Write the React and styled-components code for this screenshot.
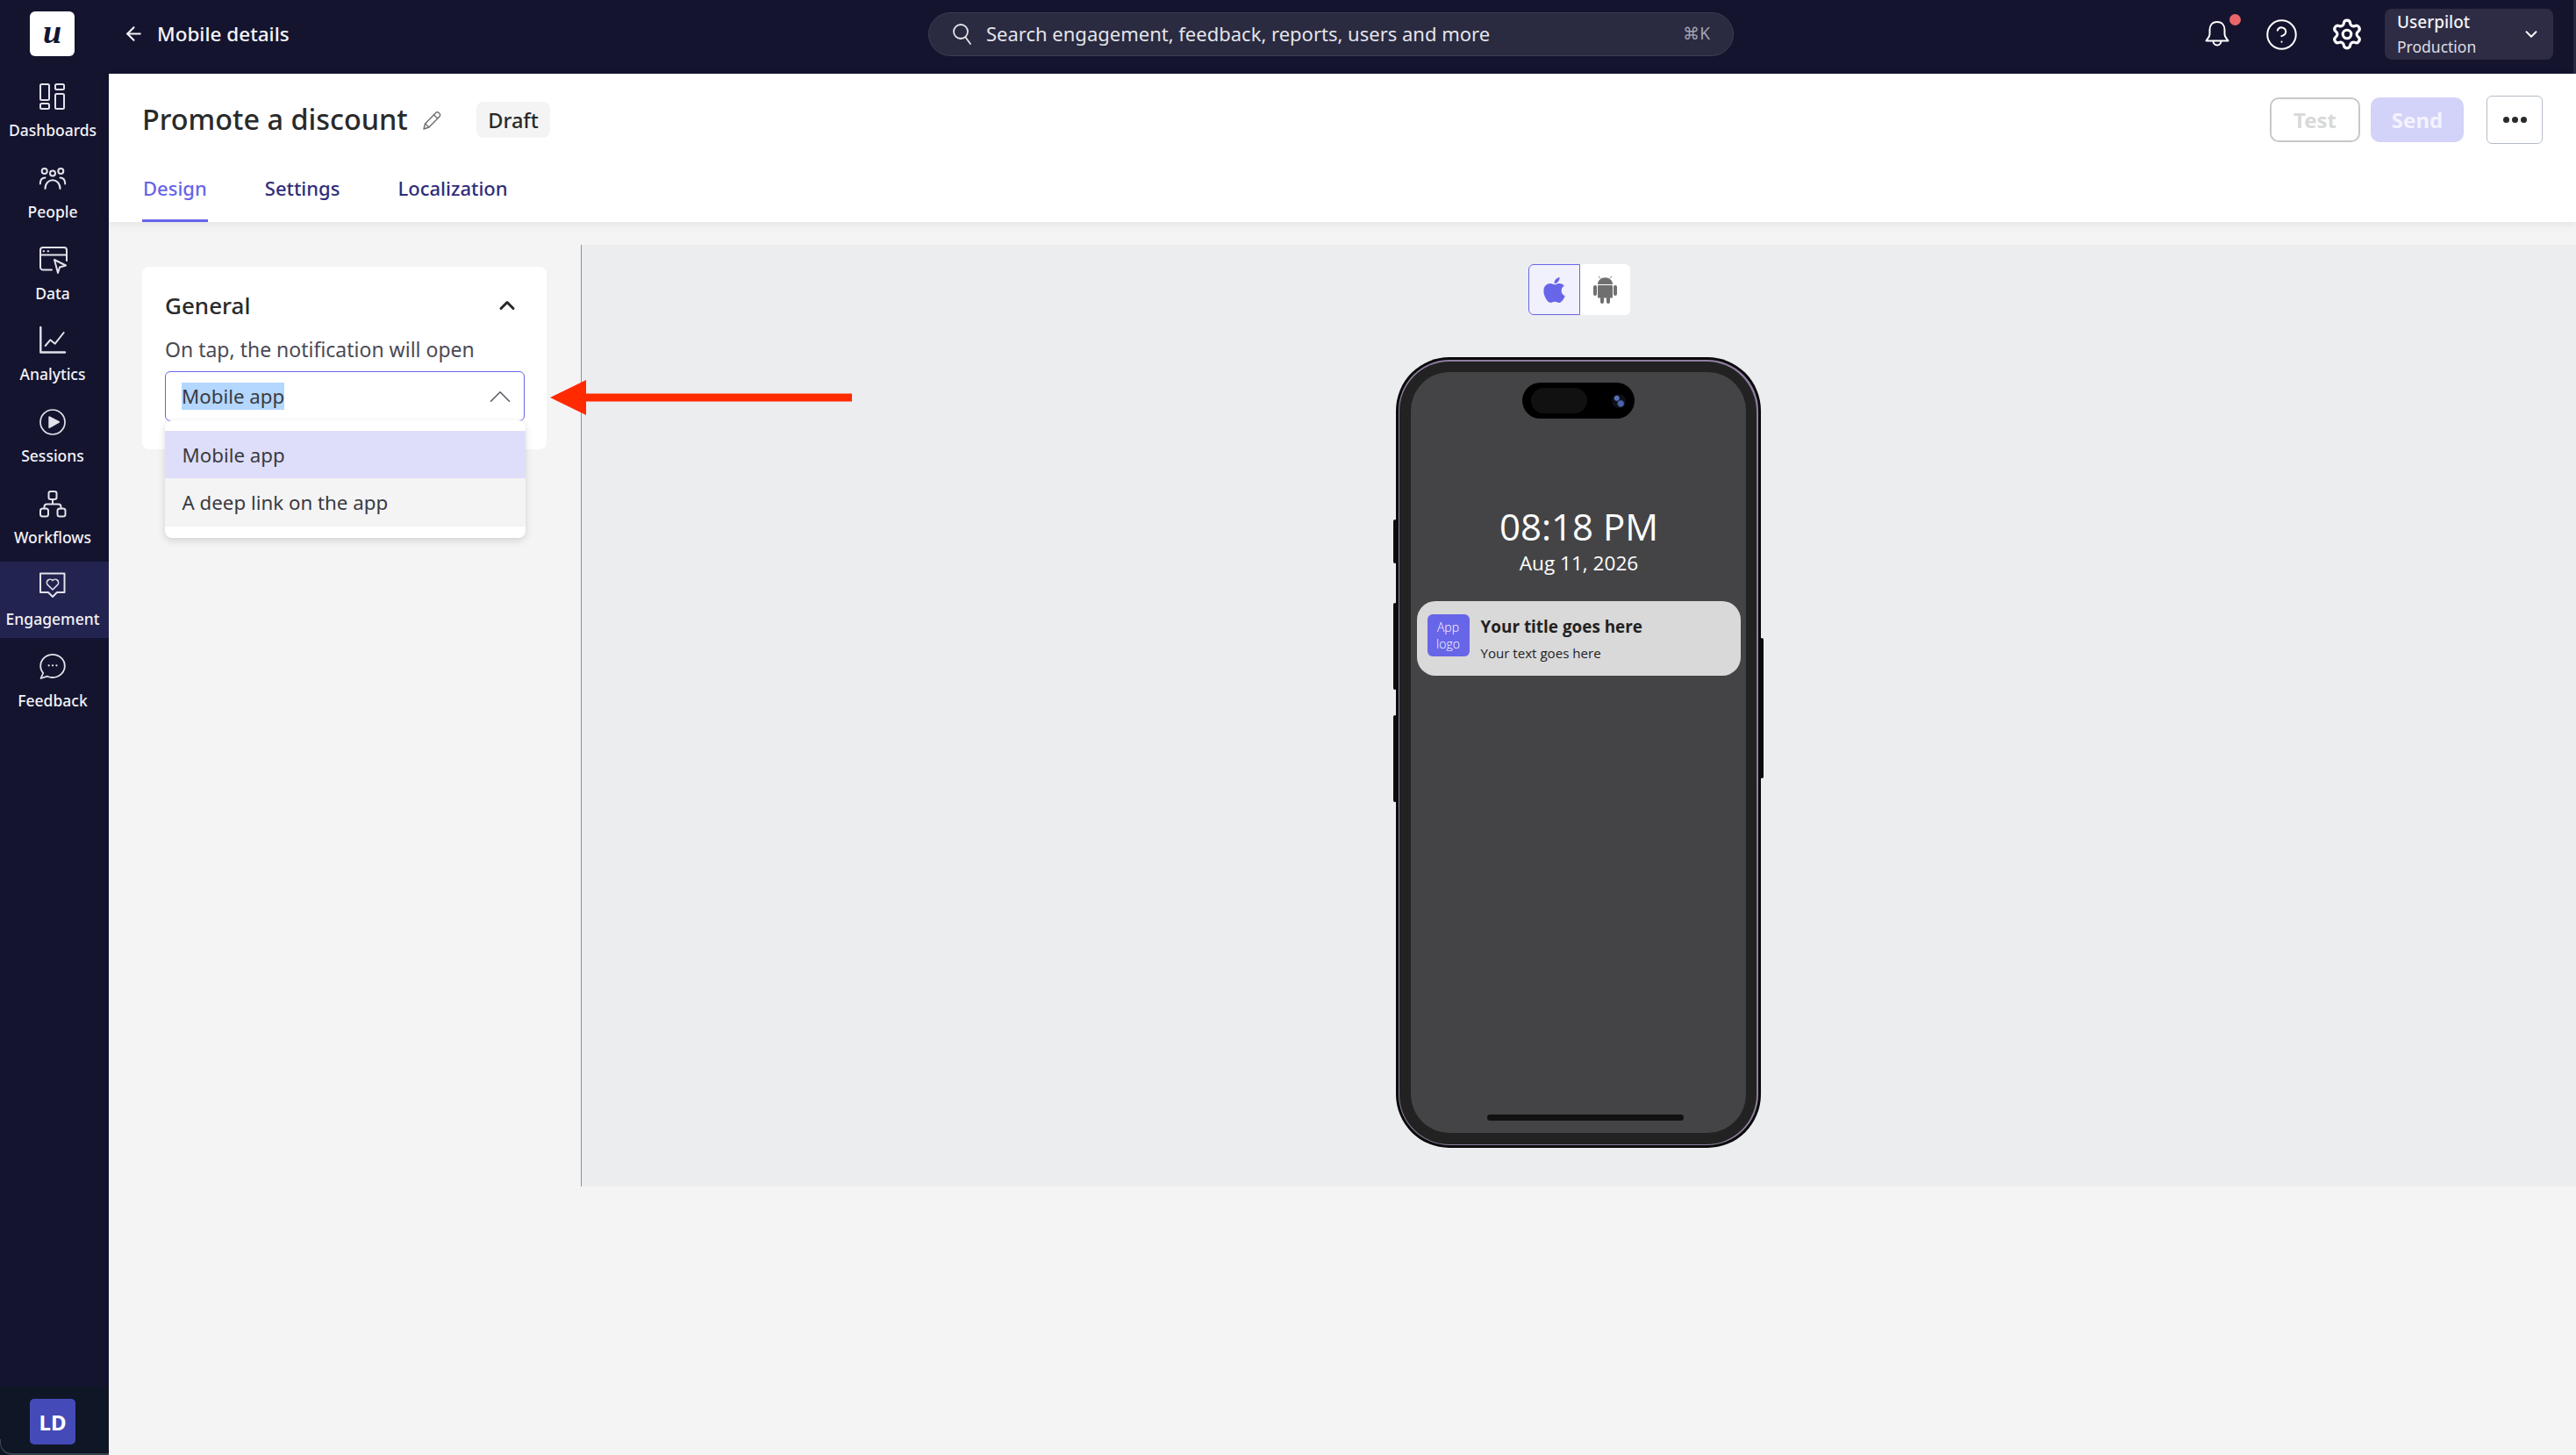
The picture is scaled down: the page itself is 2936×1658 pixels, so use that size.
import React from 'react';
import styled, { createGlobalStyle } from 'styled-components';
import { ArrowLeft, ChevronDown, ChevronUp, CircleHelp, Settings as Gear } from 'lucide-react';
import { FaApple } from 'react-icons/fa';

const Global = createGlobalStyle`
  html, body { margin: 0; padding: 0; background: #f4f4f4; }
  * { box-sizing: border-box; }
  body { font-family: "Noto Sans", "Open Sans", sans-serif; }
  #root { width: 2936px; height: 1658px; overflow: hidden; }
`;

const Page = styled.div`
  display: grid;
  grid-template-columns: 124px 1fr;
  width: 2936px;
  height: 1658px;
`;

/* Sidebar */
const Side = styled.aside`
  display: flex;
  flex-direction: column;
  background: #14142f;
  height: 100%;
`;
const LogoWrap = styled.div`
  height: 83px;
  padding: 13px 5px 0 0;
  display: flex;
  justify-content: center;
`;
const Logo = styled.div`
  width: 51px;
  height: 51px;
  background: #fff;
  border-radius: 6px;
  color: #14142f;
  font: italic 700 38px/46px "Liberation Serif", serif;
  text-align: center;
`;
const Nav = styled.nav`
  display: flex;
  flex-direction: column;
  gap: 5.8px;
`;
const NavItem = styled.div`
  height: 87px;
  padding: 12px 4px 0 0;
  display: flex;
  flex-direction: column;
  align-items: center;
  background: ${p => (p.$active ? '#232350' : 'transparent')};
  color: #f2f2f6;
  font-size: 17.5px;
  font-weight: 500;
  line-height: 24px;
`;
const NavIcon = styled.svg`
  width: 30px;
  height: 30px;
  margin-bottom: 11px;
  overflow: visible;
  fill: none;
  stroke: #e2e2ea;
  stroke-width: 2;
  stroke-linecap: round;
  stroke-linejoin: round;
  flex: none;
`;
const SideFoot = styled.div`
  position: relative;
  margin-top: auto;
  height: 78px;
  padding: 14px 0 0 34px;
  background: #0f1626;
  &::after {
    content: '';
    position: absolute;
    left: 0;
    right: 0;
    bottom: 0;
    height: 16px;
    border-left: 1px solid #3a444c;
    border-bottom: 2px solid #3a444c;
    border-bottom-left-radius: 14px;
  }
`;
const Avatar = styled.div`
  width: 52px;
  height: 52px;
  border-radius: 5px;
  background: #444bb8;
  color: #fff;
  display: flex;
  align-items: center;
  justify-content: center;
  font-size: 24px;
  font-weight: 700;
  position: relative;
  z-index: 1;
`;

/* Main */
const Main = styled.div`
  display: flex;
  flex-direction: column;
  min-width: 0;
  height: 100%;
`;
const TopBar = styled.header`
  display: grid;
  grid-template-columns: 934px 918px 1fr;
  align-items: center;
  height: 84px;
  padding-bottom: 6px;
  background: #14142f;
  color: #fff;
  border-right: 3px solid #2a2a40;
`;
const Back = styled.div`
  display: flex;
  align-items: center;
  gap: 14px;
  margin-top: -2px;
  padding-left: 16px;
  font-size: 22.5px;
  font-weight: 500;
  color: #f4f4f8;
`;
const Search = styled.div`
  display: flex;
  align-items: center;
  height: 50px;
  padding: 0 26px 2px;
  background: #2a2a40;
  border: 1px solid #3c3c54;
  border-radius: 25px;
  color: #e4e4ea;
  font-size: 22px;
  margin-top: -1px;
`;
const SearchIcon = styled.svg`
  width: 24px;
  height: 26px;
  margin: 2px 15px 0 0;
  fill: none;
  stroke: #e4e4ea;
  stroke-width: 1.8;
  stroke-linecap: round;
`;
const Shortcut = styled.span`
  margin-left: auto;
  font-size: 19px;
  color: #a4a4b0;
`;
const TopRight = styled.div`
  display: flex;
  align-items: center;
  justify-content: flex-end;
  padding-right: 23px;
`;
const BellWrap = styled.div`
  position: relative;
  width: 28px;
  height: 30px;
  margin-right: 40px;
`;
const Dot = styled.span`
  position: absolute;
  top: -8px;
  right: -13px;
  width: 13px;
  height: 13px;
  border-radius: 50%;
  background: #e9666a;
`;
const TopIconSlot = styled.div`
  display: flex;
  margin-right: ${p => p.$gap}px;
`;
const Account = styled.div`
  display: flex;
  align-items: center;
  justify-content: space-between;
  width: 192px;
  height: 58px;
  padding: 0 14px;
  background: #2e2c44;
  border-radius: 8px;
`;
const AccountText = styled.div`
  display: flex;
  flex-direction: column;
  gap: 3px;
`;
const AccountName = styled.div`
  font-size: 19px;
  font-weight: 500;
  line-height: 25px;
  color: #f2f2f6;
`;
const AccountEnv = styled.div`
  font-size: 17.5px;
  line-height: 25px;
  color: #dedee4;
`;

/* Page header */
const Header = styled.div`
  position: relative;
  z-index: 1;
  display: flex;
  flex-direction: column;
  justify-content: space-between;
  height: 169px;
  padding: 25px 38px 0 38px;
  background: #fff;
  box-shadow: 0 2px 10px rgba(0, 0, 0, 0.08);
`;
const TitleRow = styled.div`
  display: flex;
  align-items: center;
  height: 55px;
`;
const Title = styled.h1`
  margin: -3px 0 0;
  font-size: 32.4px;
  font-weight: 500;
  color: #2a2a2a;
`;
const Pencil = styled.svg`
  width: 24px;
  height: 24px;
  margin: 2px 39px 0 15px;
  fill: none;
  stroke: #6e6e6e;
  stroke-width: 1.4;
  stroke-linejoin: round;
`;
const Badge = styled.span`
  display: flex;
  align-items: center;
  height: 41px;
  padding: 0 13.5px;
  border-radius: 8px;
  background: #f4f4f4;
  color: #2a2a2a;
  font-size: 23.5px;
  font-weight: 500;
`;
const Actions = styled.div`
  display: flex;
  align-items: center;
  margin-left: auto;
`;
const TestBtn = styled.button`
  width: 103px;
  height: 51px;
  border: 2px solid #c8c8c8;
  border-radius: 10px;
  background: #fff;
  color: #d9d9d9;
  font: 700 24px "Noto Sans", sans-serif;
  padding: 0;
`;
const SendBtn = styled.button`
  width: 106px;
  height: 51px;
  margin-left: 12px;
  border: 0;
  border-radius: 10px;
  background: #d3d2f8;
  color: #f3f3fe;
  font: 700 24px "Noto Sans", sans-serif;
  padding: 0;
`;
const MoreBtn = styled.button`
  display: flex;
  align-items: center;
  justify-content: center;
  gap: 3px;
  width: 64px;
  height: 55px;
  margin-left: 26px;
  border: 1.5px solid #b5bcc8;
  border-radius: 6px;
  background: #fff;
  padding: 0;
`;
const MoreDot = styled.span`
  width: 7px;
  height: 7px;
  border-radius: 50%;
  background: #2a2a2a;
`;
const Tabs = styled.div`
  display: flex;
  gap: 64px;
`;
const Tab = styled.div`
  height: 56px;
  padding: 0 1px;
  border-bottom: 3px solid ${p => (p.$active ? '#6765e8' : 'transparent')};
  color: ${p => (p.$active ? '#6765e8' : '#2e2e7a')};
  font-size: 22px;
  font-weight: 500;
  line-height: 34px;
`;

/* Body */
const Body = styled.div`
  position: relative;
  flex: 1;
  display: flex;
  align-items: flex-start;
  background: #f4f4f4;
`;
const Panel = styled.div`
  width: 538px;
  padding: 51px 0 0 38px;
  flex: none;
`;
const Card = styled.section`
  width: 461px;
  padding: 28px 25px 32px 26px;
  background: #fff;
  border-radius: 8px;
`;
const CardHead = styled.div`
  display: flex;
  align-items: center;
  justify-content: space-between;
  height: 32px;
  padding-right: 6px;
  font-size: 26px;
  font-weight: 500;
  color: #2a2a2a;
`;
const FieldLabel = styled.div`
  margin-top: 18px;
  font-size: 23px;
  line-height: 32px;
  color: #4a4a55;
`;
const Select = styled.div`
  position: relative;
  display: flex;
  align-items: center;
  justify-content: space-between;
  height: 57px;
  margin-top: 9px;
  padding: 0 6px 0 18px;
  border: 1.5px solid #6765e8;
  border-radius: 6px;
  color: #3a3a42;
  font-size: 22.3px;
`;
const Highlight = styled.span`
  background: #b3d7ff;
  line-height: 31px;
`;
const Menu = styled.div`
  position: absolute;
  top: 100%;
  left: -1.5px;
  right: -1.5px;
  padding: 12px 0 13px;
  background: #fff;
  border-radius: 8px;
  box-shadow: 0 3px 8px rgba(0, 0, 0, 0.14);
  z-index: 2;
`;
const Option = styled.div`
  display: flex;
  align-items: center;
  height: ${p => p.$h}px;
  padding-left: 20px;
  background: ${p => p.$bg};
  color: #3a3a42;
  font-size: 22.3px;
`;
const Callout = styled.svg`
  position: absolute;
  left: 503px;
  top: 180px;
  width: 344px;
  height: 40px;
  z-index: 3;
`;

/* Preview */
const Preview = styled.div`
  flex: 1;
  display: flex;
  flex-direction: column;
  align-items: center;
  gap: 48px;
  height: 1073px;
  margin-top: 26px;
  padding-top: 22px;
  background: #ecedef;
  border-left: 1px solid #8f8f8f;
`;
const Toggle = styled.div`
  display: flex;
  height: 58px;
  width: 116px;
  border-radius: 6px;
  background: #fff;
`;
const ToggleBtn = styled.div`
  flex: ${p => (p.$active ? '0 0 59px' : '1')};
  display: flex;
  align-items: center;
  justify-content: center;
  font-size: 33px;
  background: ${p => (p.$active ? '#f1f1fd' : 'transparent')};
  border: ${p => (p.$active ? '1.5px solid #6765e8' : '0')};
  border-radius: ${p => (p.$active ? '6px 0 0 6px' : '0 6px 6px 0')};
  color: ${p => (p.$active ? '#6765e8' : '#6f6f6f')};
`;
const AndroidIcon = styled.svg`
  width: 27px;
  height: 32px;
  fill: #6f6f6f;
  stroke: none;
`;
const Phone = styled.div`
  position: relative;
  display: flex;
  width: 416px;
  height: 901px;
  margin-left: -2px;
  padding: 3px;
  border-radius: 61px;
  background: #0a0a0a;
`;
const Rim = styled.div`
  flex: 1;
  display: flex;
  padding: 1.5px;
  border-radius: 58px;
  background: #8e7ea0;
`;
const Bezel = styled.div`
  flex: 1;
  display: flex;
  padding: 12.5px;
  border-radius: 57px;
  background: #222;
`;
const Screen = styled.div`
  flex: 1;
  display: flex;
  flex-direction: column;
  align-items: center;
  padding-top: 12px;
  border-radius: 44px;
  background: #444446;
  font-family: "Open Sans", sans-serif;
  color: #fff;
`;
const SideButton = styled.span`
  position: absolute;
  ${p => (p.$right ? 'right: -3px;' : 'left: -3px;')}
  top: ${p => p.$top}px;
  width: 4px;
  height: ${p => p.$h}px;
  border-radius: 2px;
  background: #0c0c0c;
`;
const Island = styled.div`
  display: flex;
  align-items: center;
  justify-content: space-between;
  width: 128px;
  height: 41px;
  padding: 0 10px;
  border-radius: 21px;
  background: #000;
`;
const IslandPill = styled.div`
  width: 64px;
  height: 29px;
  border-radius: 15px;
  background: #111;
`;
const Camera = styled.div`
  width: 16px;
  height: 16px;
  border-radius: 50%;
  background:
    radial-gradient(circle at 36% 30%, #5a6fb8 0 16%, transparent 24%),
    radial-gradient(circle at 64% 68%, #4a62aa 0 20%, transparent 30%),
    #0d1018;
`;
const Time = styled.div`
  margin-top: 95px;
  padding-left: 2px;
  font-size: 42px;
  line-height: 56px;
`;
const DateLine = styled.div`
  margin-top: -3px;
  padding-left: 2px;
  font-size: 22.6px;
  line-height: 34px;
`;
const Notice = styled.div`
  display: flex;
  width: 369px;
  height: 85px;
  margin: 26px 0 0 1px;
  padding: 15px 12px;
  gap: 13px;
  border-radius: 21px;
  background: #d9d9d9;
`;
const AppLogo = styled.div`
  flex: none;
  display: flex;
  align-items: center;
  justify-content: center;
  width: 48px;
  height: 48px;
  border-radius: 6px;
  background: #6765e8;
  color: #fff;
  font-size: 14px;
  font-weight: 300;
  line-height: 19px;
  text-align: center;
`;
const NoticeText = styled.div`
  display: flex;
  flex-direction: column;
  color: #222;
`;
const NoticeTitle = styled.div`
  font-size: 18.9px;
  font-weight: 700;
  line-height: 30px;
  margin-top: -1px;
`;
const NoticeBody = styled.div`
  font-size: 15.1px;
  line-height: 30px;
`;
const HomeBar = styled.div`
  width: 224px;
  height: 7px;
  margin: auto 0 14px 16px;
  border-radius: 4px;
  background: #111;
`;

const navItems = [
  ['Dashboards', <><rect x="1" y="1" width="10" height="18" rx="1.5" /><rect x="1" y="23" width="10" height="6" rx="1.5" /><rect x="18" y="1" width="10" height="6" rx="1.5" /><rect x="18" y="12" width="10" height="17" rx="1.5" /></>],
  ['People', <><circle cx="5.7" cy="7" r="3" /><circle cx="15" cy="9.5" r="3" /><circle cx="24.3" cy="7" r="3" /><path d="M6.5 27c0-13 17-13 17 0" /><path d="M.8 21.5C.8 17 3 14.500 6.500 14.500" /><path d="M29.200 21.500c0-4.500-2.200-7-5.700-7" /></>],
  ['Data', <><path d="M14 26.500H4A3 3 0 0 1 1 23.500V4A3 3 0 0 1 4 1H28A3 3 0 0 1 31 4V16" /><path d="M1 9.500H31" /><path d="M4.500 5.300h.6M9.500 5.300h.6" /><path d="M17 15l13 6.500-7 2-2 6.500z" /></>],
  ['Analytics', <><path d="M1.300 0V28.500H29" strokeWidth="2.400" /><path d="M6.700 21l5.600-6.700 5.400 4.400L27.700 6" /></>],
  ['Sessions', <><circle cx="15" cy="15" r="14" strokeWidth="1.700" /><path d="M11.300 9.300L22 15l-10.700 6z" fill="#e2e2ea" /></>],
  ['Workflows', <><rect x="10.500" y="1" width="9" height="9" rx="2.200" /><rect x="1" y="20.500" width="9" height="9" rx="2.500" /><rect x="20.500" y="20.500" width="9" height="9" rx="2.500" /><path d="M15 10v5M5.500 20.500v-2a3 3 0 0 1 3-3h13a3 3 0 0 1 3 3v2" /></>],
  ['Engagement', <><path d="M1 1.500H28.500V23H20l-5 5-5-5H1z" /><path d="M15 20l-5.800-5.800a3.700 3.700 0 0 1 5.800-4.600 3.700 3.700 0 0 1 5.800 4.600z" strokeWidth="1.600" /></>],
  ['Feedback', <><path d="M15 .9c7.600 0 13.800 5.800 13.800 13S22.600 27 15 27c-2.200 0-4.200-.5-6-1.300L1.500 28 4.200 22C2.300 19.700 1.200 17 1.200 14 1.200 6.700 7.400.9 15 .9z" strokeWidth="1.800" /><path d="M10.600 13.300h.1M15 13.300h.1M19.400 13.300h.1" strokeWidth="2.200" /></>],
];

export default function App() {
  return (
    <Page>
      <Global />
      <Side>
        <LogoWrap><Logo>u</Logo></LogoWrap>
        <Nav>
          {navItems.map(([label, icon]) => (
            <NavItem key={label} $active={label === 'Engagement'}>
              <NavIcon viewBox="0 0 30 30">{icon}</NavIcon>
              {label}
            </NavItem>
          ))}
        </Nav>
        <SideFoot><Avatar>LD</Avatar></SideFoot>
      </Side>
      <Main>
        <TopBar>
          <Back><ArrowLeft size={25} strokeWidth={2} />Mobile details</Back>
          <Search>
            <SearchIcon viewBox="0 0 24 26"><circle cx="10" cy="10" r="8" /><path d="M15.500 16.500L21 24" /></SearchIcon>
            Search engagement, feedback, reports, users and more
            <Shortcut>⌘K</Shortcut>
          </Search>
          <TopRight>
            <BellWrap>
              <svg width="28" height="30" viewBox="0 0 28 30" fill="none" stroke="#fff" strokeWidth="2" strokeLinejoin="round">
                <path d="M14 1C8 1 5.500 5.500 5.500 10v5c0 3-2.500 5-4 7.500h25c-1.500-2.500-4-4.500-4-7.500v-5C22.500 5.500 20 1 14 1z" />
                <path d="M9.500 22.500a4.500 5 0 0 0 9 0" />
              </svg>
              <Dot />
            </BellWrap>
            <TopIconSlot $gap={36}><CircleHelp size={39} strokeWidth={1.25} color="#fff" /></TopIconSlot>
            <TopIconSlot $gap={24}><Gear size={38} strokeWidth={2} color="#fff" /></TopIconSlot>
            <Account>
              <AccountText>
                <AccountName>Userpilot</AccountName>
                <AccountEnv>Production</AccountEnv>
              </AccountText>
              <ChevronDown size={22} strokeWidth={2} color="#fff" />
            </Account>
          </TopRight>
        </TopBar>
        <Header>
          <TitleRow>
            <Title>Promote a discount</Title>
            <Pencil viewBox="0 0 24 24"><path d="M3 21l1.500-6L16 3.200a2.500 2.500 0 0 1 4.800 3.800L9 19z" /><path d="M14.500 5l4.500 4M4.500 15l4.500 4" /></Pencil>
            <Badge>Draft</Badge>
            <Actions>
              <TestBtn>Test</TestBtn>
              <SendBtn>Send</SendBtn>
              <MoreBtn><MoreDot /><MoreDot /><MoreDot /></MoreBtn>
            </Actions>
          </TitleRow>
          <Tabs>
            <Tab $active>Design</Tab>
            <Tab>Settings</Tab>
            <Tab>Localization</Tab>
          </Tabs>
        </Header>
        <Body>
          <Panel>
            <Card>
              <CardHead>General<ChevronUp size={28} strokeWidth={2.600} color="#2a2a2a" /></CardHead>
              <FieldLabel>On tap, the notification will open</FieldLabel>
              <Select>
                <Highlight>Mobile app</Highlight>
                <ChevronUp size={42} strokeWidth={0.900} color="#5a5a62" />
                <Menu>
                  <Option $h={54} $bg="#dedefa">Mobile app</Option>
                  <Option $h={55} $bg="#f4f4f4">A deep link on the app</Option>
                </Menu>
              </Select>
            </Card>
          </Panel>
          <Preview>
            <Toggle>
              <ToggleBtn $active><FaApple /></ToggleBtn>
              <ToggleBtn>
                <AndroidIcon viewBox="0 0 27 32">
                  <path d="M8 3.500L6 .5M19 3.500L21 .5" stroke="#6f6f6f" strokeWidth="0.800" />
                  <path d="M5 10C5 5.300 9 2.200 13.500 2.200S22 5.300 22 10z" />
                  <rect x="5" y="11" width="17" height="14.500" rx="1" />
                  <rect x="0" y="11" width="4" height="12" rx="2" />
                  <rect x="23" y="11" width="4" height="12" rx="2" />
                  <rect x="8" y="24" width="4" height="8" rx="2" />
                  <rect x="15" y="24" width="4" height="8" rx="2" />
                </AndroidIcon>
              </ToggleBtn>
            </Toggle>
            <Phone>
              <SideButton $top={185} $h={50} />
              <SideButton $top={280} $h={99} />
              <SideButton $top={408} $h={99} />
              <SideButton $right $top={320} $h={160} />
              <Rim>
                <Bezel>
                  <Screen>
                    <Island><IslandPill /><Camera /></Island>
                    <Time>08:18 PM</Time>
                    <DateLine>Aug 11, 2026</DateLine>
                    <Notice>
                      <AppLogo>App<br />logo</AppLogo>
                      <NoticeText>
                        <NoticeTitle>Your title goes here</NoticeTitle>
                        <NoticeBody>Your text goes here</NoticeBody>
                      </NoticeText>
                    </Notice>
                    <HomeBar />
                  </Screen>
                </Bezel>
              </Rim>
            </Phone>
          </Preview>
          <Callout viewBox="0 0 344 40"><path d="M0 20L41 0V15.500H344V24.500H41V40z" fill="#ff2a00" /></Callout>
        </Body>
      </Main>
    </Page>
  );
}
